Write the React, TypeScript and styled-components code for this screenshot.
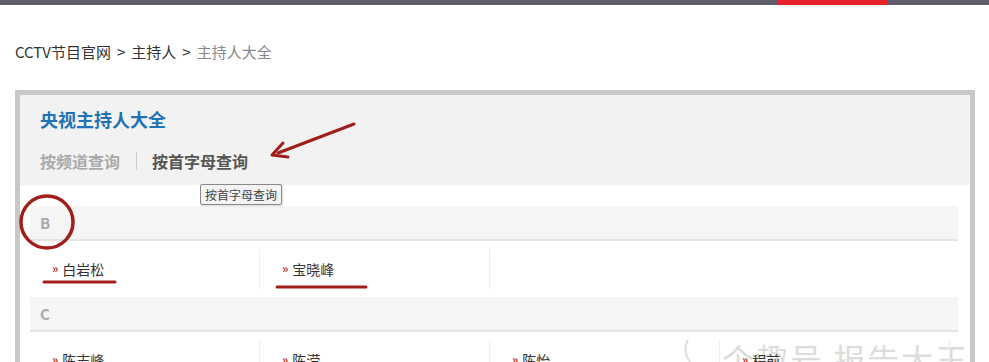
import React from 'react';
import styled, { createGlobalStyle } from 'styled-components';

const GlobalStyle = createGlobalStyle`
  body {
    margin: 0;
    background: #fff;
    font-family: "Noto Sans CJK SC", "Liberation Sans", sans-serif;
    color: #333;
  }
`;

const Page = styled.div`
  position: relative;
  width: 989px;
  height: 362px;
  overflow: hidden;
`;

const TopBar = styled.div`
  height: 5px;
  background: #5f5d6d;
  display: flex;
  justify-content: flex-end;
  padding-right: 101px;
`;

const TopBarActive = styled.div`
  width: 110px;
  background: #e8202a;
`;

const Breadcrumb = styled.div`
  padding: 37px 0 0 15px;
  font-size: 15px;
  line-height: 20px;
  color: #333;
  display: flex;
  gap: 6px;
`;

const Crumb = styled.span<{ $current?: boolean }>`
  color: ${(p) => (p.$current ? '#888' : '#333')};
`;

const Panel = styled.div`
  margin: 28px 0 0 15px;
  width: 950px;
  border: 5px solid #c8c8c8;
  border-bottom: none;
  height: 400px;
`;

const Header = styled.div`
  position: relative;
  background: #f2f2f2;
  height: 90px;
  padding: 14px 0 0 20px;
  box-sizing: border-box;
`;

const Title = styled.h1`
  margin: 0;
  font-size: 18px;
  line-height: 20px;
  font-weight: bold;
  color: #1f72b3;
`;

const Tabs = styled.div`
  margin-top: 20px;
  display: flex;
  align-items: center;
  font-size: 16px;
  line-height: 24px;
  font-weight: bold;
`;

const Tab = styled.span<{ $active?: boolean }>`
  color: ${(p) => (p.$active ? '#555' : '#aaa')};
`;

const TabDivider = styled.span`
  width: 1px;
  height: 18px;
  background: #ccc;
  margin: 0 15px 0 16px;
`;

const Tooltip = styled.div`
  position: absolute;
  left: 180px;
  top: 89px;
  padding: 0 4px;
  height: 19px;
  line-height: 19px;
  font-size: 12px;
  font-weight: normal;
  color: #444;
  background: #f3f3f3;
  border: 1px solid #888;
  border-radius: 2px;
  box-shadow: 1px 1px 2px rgba(0, 0, 0, 0.15);
  z-index: 2;
`;

const Content = styled.div`
  padding: 21px 12px 0 10px;
`;

const LetterRow = styled.div`
  height: 33px;
  line-height: 33px;
  background: #f5f5f5;
  border-bottom: 2px solid #e4e4e4;
  padding-left: 10px;
  font-size: 15px;
  font-weight: bold;
  color: #aaa;
`;

const NameRow = styled.div`
  height: 56px;
  display: grid;
  grid-template-columns: repeat(4, 230px);
  align-items: center;
`;

const NameCell = styled.div`
  height: 40px;
  border-right: 1px solid #eee;
  display: flex;
  align-items: center;
  padding-left: 22px;
  font-size: 14px;
  color: #333;
  gap: 4px;
  position: relative;
  z-index: 2;
`;

const Arrow = styled.span`
  color: #b3341f;
  font-size: 12px;
  font-weight: bold;
  position: relative;
  top: -2px;
`;

const Overlay = styled.svg`
  position: absolute;
  left: 0;
  top: 0;
  pointer-events: none;
  z-index: 3;
`;

const Watermark = styled.div`
  position: absolute;
  left: 722px;
  top: 338px;
  font-size: 32px;
  line-height: 40px;
  color: #dcdcdc;
  letter-spacing: 2px;
  pointer-events: none;
  z-index: 1;
  white-space: nowrap;
`;

const groups: { letter: string; names: string[] }[] = [
  { letter: 'B', names: ['白岩松', '宝晓峰'] },
  { letter: 'C', names: ['陈志峰', '陈滢', '陈怡', '程前'] },
];

export default function App() {
  return (
    <>
      <GlobalStyle />
      <Page>
        <TopBar>
          <TopBarActive />
        </TopBar>
        <Breadcrumb>
          <Crumb>CCTV节目官网</Crumb>
          <Crumb>&gt;</Crumb>
          <Crumb>主持人</Crumb>
          <Crumb>&gt;</Crumb>
          <Crumb $current>主持人大全</Crumb>
        </Breadcrumb>
        <Panel>
          <Header>
            <Title>央视主持人大全</Title>
            <Tabs>
              <Tab>按频道查询</Tab>
              <TabDivider />
              <Tab $active>按首字母查询</Tab>
            </Tabs>
            <Tooltip>按首字母查询</Tooltip>
          </Header>
          <Content>
            {groups.map((g) => (
              <div key={g.letter}>
                <LetterRow>{g.letter}</LetterRow>
                <NameRow>
                  {g.names.map((n) => (
                    <NameCell key={n}>
                      <Arrow>»</Arrow>
                      {n}
                    </NameCell>
                  ))}
                </NameRow>
              </div>
            ))}
          </Content>
        </Panel>
        <Watermark>个趣号 报告大王</Watermark>
        <Overlay width="989" height="362" viewBox="0 0 989 362">
          <g stroke="#a01f1a" fill="none" strokeLinecap="round">
            <line x1="354" y1="124" x2="278" y2="153" strokeWidth="3" />
            <path d="M283 143 L272 155 L288 157" strokeWidth="3" strokeLinejoin="round" />
            <circle cx="47" cy="222" r="26" strokeWidth="3.5" />
            <line x1="44" y1="282" x2="115" y2="282" strokeWidth="3" />
            <line x1="277" y1="287" x2="366" y2="287" strokeWidth="3" />
          </g>
          <path d="M690 362 Q682 350 688 340" stroke="#ddd" strokeWidth="2" fill="none" />
        </Overlay>
      </Page>
    </>
  );
}
